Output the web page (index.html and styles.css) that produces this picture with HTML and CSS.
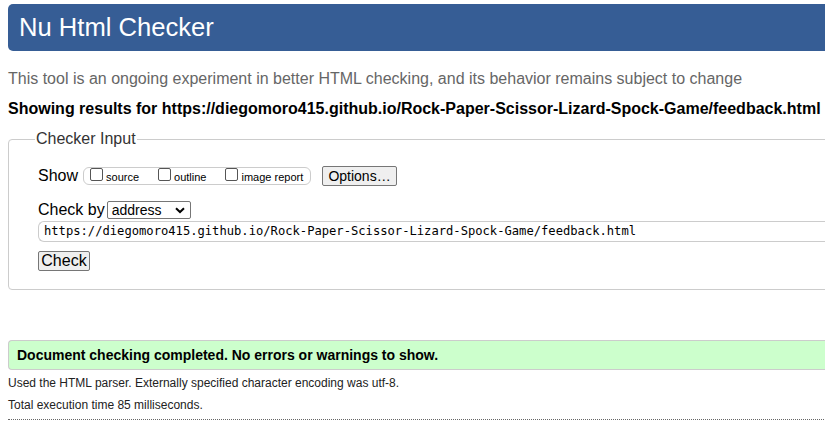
FILE: index.html
```html
<!DOCTYPE html>
<html>
<head>
<meta charset="utf-8">
<title>Nu Html Checker</title>
<link rel="stylesheet" href="styles.css">
</head>
<body>
<div class="page">
  <h1 class="title">Nu Html Checker</h1>
  <p class="intro">This tool is an ongoing experiment in better HTML checking, and its behavior remains subject to change</p>
  <p class="showing">Showing results for https://diegomoro415.github.io/Rock-Paper-Scissor-Lizard-Spock-Game/feedback.html</p>
  <fieldset class="input-box">
    <legend class="legend">Checker Input</legend>
    <div class="row show-row">
      <span class="label">Show</span>
      <span class="opts">
        <label class="opt"><span class="cb"></span>source</label>
        <label class="opt"><span class="cb"></span>outline</label>
        <label class="opt"><span class="cb"></span>image report</label>
      </span>
      <span class="btn btn-options">Options…</span>
    </div>
    <div class="row check-row">
      <span class="label">Check by</span>
      <span class="select">address<svg class="chev" width="10" height="7" viewBox="0 0 10 7"><path d="M1 1.2 L5 5 L9 1.2" fill="none" stroke="#000" stroke-width="2"/></svg></span>
    </div>
    <div class="url">https://diegomoro415.github.io/Rock-Paper-Scissor-Lizard-Spock-Game/feedback.html</div>
    <div class="row"><span class="btn btn-check">Check</span></div>
  </fieldset>
  <div class="success">Document checking completed. No errors or warnings to show.</div>
  <p class="detail detail-first">Used the HTML parser. Externally specified character encoding was utf-8.</p>
  <p class="detail">Total execution time 85 milliseconds.</p>
  <hr class="dotted">
</div>
</body>
</html>
```
FILE: styles.css
```css
html, body {
  margin: 0;
  padding: 0;
  overflow: hidden;
  background: #fff;
}
body {
  font-family: "Liberation Sans", Arial, sans-serif;
  color: #000;
}
.page {
  width: 900px;
  padding: 4px 0 0 8px;
}
.title {
  margin: 0;
  height: 47px;
  box-sizing: border-box;
  background: #365d95;
  color: #fff;
  font-weight: normal;
  font-size: 25.6px;
  line-height: 47px;
  padding-left: 11px;
  border-radius: 5px 0 0 5px;
}
.intro {
  margin: 18px 0 0 0;
  font-size: 16px;
  line-height: 20px;
  color: #666;
}
.showing {
  margin: 10px 0 0 0;
  font-size: 16px;
  line-height: 20px;
  font-weight: bold;
}
.input-box {
  margin: 11px 0 0 0;
  border: 1px solid #ccc;
  border-radius: 4px;
  padding: 17px 0 18px 29px;
  min-width: 0;
}
.legend {
  font-size: 16px;
  color: #333;
  padding: 0 1px;
  margin-left: -3px;
}
.row {
  display: flex;
  align-items: center;
}
.label {
  font-size: 16px;
  line-height: 20px;
  color: #000;
}
.show-row {
  height: 22px;
}
.opts {
  margin-left: 5px;
  display: flex;
  align-items: center;
  border: 1px solid #ccc;
  border-radius: 6px;
  height: 18px;
  width: 228px;
  box-sizing: border-box;
  padding-left: 6px;
  gap: 19px;
}
.opt {
  display: flex;
  align-items: center;
  font-size: 11px;
  color: #000;
  line-height: 13px;
  padding-top: 2px;
}
.cb {
  width: 11px;
  height: 11px;
  border: 1px solid #555;
  border-radius: 2px;
  margin-right: 3px;
  margin-top: -5px;
}
.btn {
  display: inline-block;
  box-sizing: border-box;
  border: 1px solid #767676;
  border-radius: 2px;
  background: #efefef;
  color: #000;
  font-size: 14px;
  text-align: center;
}
.btn-options {
  margin-left: 11px;
  width: 75px;
  height: 20px;
  line-height: 18px;
}
.check-row {
  margin-top: 13px;
  height: 20px;
}
.select {
  margin-left: 2px;
  width: 84px;
  height: 18px;
  box-sizing: border-box;
  border: 1px solid #767676;
  border-radius: 2px;
  font-size: 14px;
  line-height: 16px;
  padding-left: 4px;
  display: flex;
  align-items: center;
  justify-content: space-between;
  padding-right: 5px;
}
.chev {
  display: block;
}
.url {
  margin-top: 1px;
  height: 21px;
  box-sizing: border-box;
  border: 1px solid #ccc;
  border-right: none;
  border-radius: 6px 0 0 6px;
  font-family: "DejaVu Sans Mono", monospace;
  font-size: 12.15px;
  line-height: 19px;
  padding-left: 5px;
  color: #000;
}
.btn-check {
  margin-top: 9px;
  width: 52px;
  height: 20px;
  line-height: 18px;
  font-size: 16px;
}
.success {
  margin-top: 50px;
  height: 30px;
  box-sizing: border-box;
  border: 1px solid #ccc;
  border-right: none;
  border-radius: 4px 0 0 4px;
  background: #ccffcc;
  font-weight: bold;
  font-size: 14px;
  line-height: 28px;
  padding-left: 8px;
}
.detail {
  margin: 0;
  font-size: 12px;
  line-height: 22px;
  color: #222;
}
.detail-first {
  margin-top: 2px;
}
.dotted {
  margin: 3px 0 0 0;
  border: none;
  border-top: 1px dotted #666;
  height: 0;
}
```
